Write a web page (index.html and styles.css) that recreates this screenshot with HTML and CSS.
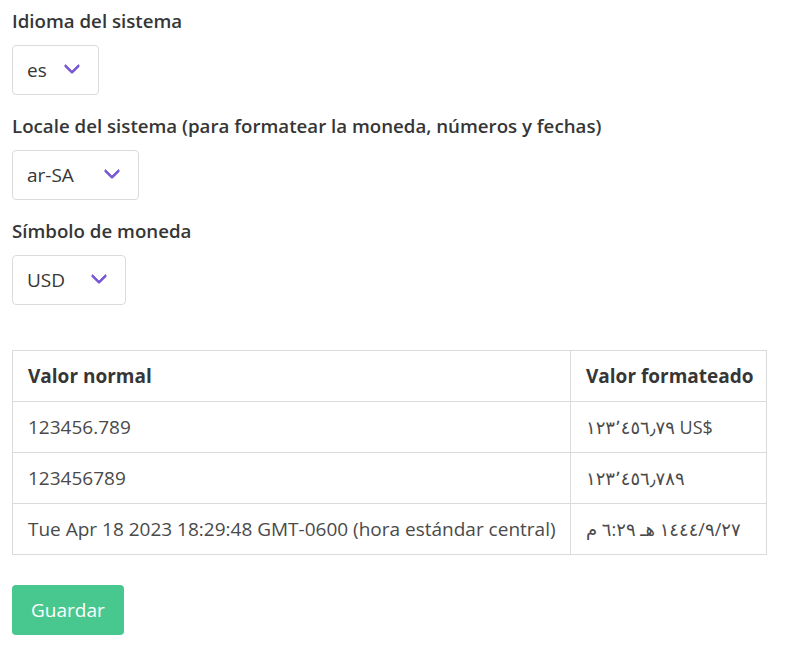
FILE: index.html
```html
<!DOCTYPE html>
<html lang="es">
<head>
<meta charset="utf-8">
<title>Configuración</title>
<link rel="stylesheet" href="styles.css">
</head>
<body>
<div class="page">
  <div class="fields">
    <div class="field">
      <label class="label">Idioma del sistema</label>
      <div class="select select-lang">
        <select><option>es</option><option>en</option></select>
      </div>
    </div>
    <div class="field">
      <label class="label">Locale del sistema (para formatear la moneda, números y fechas)</label>
      <div class="select select-locale">
        <select><option>ar-SA</option><option>es-MX</option></select>
      </div>
    </div>
    <div class="field">
      <label class="label">Símbolo de moneda</label>
      <div class="select select-currency">
        <select><option>USD</option><option>MXN</option></select>
      </div>
    </div>
  </div>

  <table class="table">
    <colgroup><col class="col-normal"><col class="col-fmt"></colgroup>
    <thead>
      <tr><th>Valor normal</th><th>Valor formateado</th></tr>
    </thead>
    <tbody>
      <tr><td>123456.789</td><td class="ar">&#x200F;١٢٣٬٤٥٦٫٧٩ US$</td></tr>
      <tr><td>123456789</td><td class="ar">١٢٣٬٤٥٦٫٧٨٩</td></tr>
      <tr><td>Tue Apr 18 2023 18:29:48 GMT-0600 (hora estándar central)</td><td class="ar">٢٧&#x200F;/٩&#x200F;/١٤٤٤ هـ ٦:٢٩ م</td></tr>
    </tbody>
  </table>

  <button class="button" type="button">Guardar</button>
</div>
</body>
</html>
```

FILE: styles.css
```css
html, body {
  margin: 0;
  padding: 0;
  background: #ffffff;
}

body {
  font-family: "Open Sans", "DejaVu Sans", sans-serif;
  font-size: 19px;
  line-height: 1.5;
  color: #4a4a4a;
}

.page {
  padding: 5px 12px 0;
}

.fields {
  display: flex;
  flex-direction: column;
  gap: 15px;
}

.field {
  display: flex;
  flex-direction: column;
  align-items: flex-start;
  gap: 10px;
}

.label {
  display: block;
  height: 30px;
  line-height: 31px;
  font-size: 18.7px;
  font-weight: 600;
  color: #363636;
}

.select {
  position: relative;
  display: inline-block;
  height: 50px;
}

.select select {
  appearance: none;
  -webkit-appearance: none;
  box-sizing: border-box;
  height: 50px;
  width: 100%;
  margin: 0;
  padding: 0 50px 0 14px;
  border: 1px solid #dbdbdb;
  border-radius: 4px;
  background: #ffffff;
  font-family: inherit;
  font-size: 19px;
  color: #363636;
  outline: none;
  cursor: pointer;
}

.select::after {
  content: "";
  position: absolute;
  right: 21px;
  top: 50%;
  width: 12px;
  height: 12px;
  margin-top: -10px;
  box-sizing: border-box;
  border: 3px solid #7957d5;
  border-top: 0;
  border-right: 0;
  border-radius: 2px;
  transform: rotate(-45deg);
  pointer-events: none;
}

.select-lang { width: 87px; }
.select-locale { width: 127px; }
.select-currency { width: 114px; }

.table {
  margin-top: 45px;
  width: 754px;
  table-layout: fixed;
  border-collapse: collapse;
  border: 1px solid #dbdbdb;
  background: #ffffff;
}

.col-normal { width: 558px; }
.col-fmt { width: 196px; }

.table th,
.table td {
  height: 51px;
  box-sizing: border-box;
  padding: 0 15px;
  border: 1px solid #dbdbdb;
  text-align: left;
  vertical-align: middle;
  white-space: nowrap;
}

.table th {
  font-weight: 700;
  color: #363636;
}

.table td {
  color: #4a4a4a;
}

.table td.ar {
  font-size: 18px;
}

.button {
  display: block;
  margin-top: 30px;
  height: 50px;
  padding: 0 19px;
  border: 0;
  border-radius: 4px;
  background: #48c78e;
  color: #ffffff;
  font-family: inherit;
  font-size: 19px;
  cursor: pointer;
}
```
